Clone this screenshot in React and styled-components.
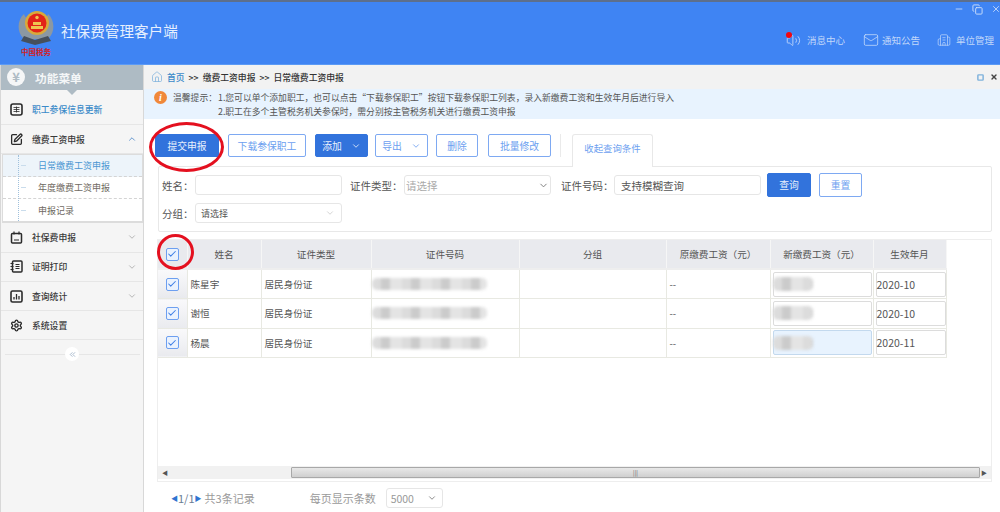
import React from 'react'
import styled, { createGlobalStyle } from 'styled-components'
import {
  ChevronDown, ChevronUp, ChevronsLeft, House, Mail, Building2, Volume2, Minus, X,
  SquarePen, Settings, Check, Square, Copy,
} from 'lucide-react'

const GlobalStyle = createGlobalStyle`
  html, body { margin: 0; padding: 0; background: #fff; }
  * { box-sizing: border-box; }
  body { font-family: "Noto Sans CJK SC", "Liberation Sans", sans-serif; color: #444; }
`

const Page = styled.div`
  width: 1000px;
  height: 512px;
  overflow: hidden;
  display: flex;
  flex-direction: column;
`

const Header = styled.header`
  height: 65px;
  flex: none;
  display: flex;
  background: #3f84f3;
  border-top: 2px solid #5d6f8c;
  border-bottom: 1px solid #5b9af5;
  padding-left: 18px;
`

const Logo = styled.div`
  width: 36px;
  display: flex;
  flex-direction: column;
  align-items: center;
  padding-top: 8px;
`

const LogoMark = styled.span`
  font-size: 7.5px;
  line-height: 10px;
  font-weight: 700;
  color: #d3201f;
  white-space: nowrap;
`

const AppTitle = styled.h1`
  margin: 0 0 0 7px;
  padding-top: 19px;
  font-size: 14.6px;
  line-height: 20px;
  font-weight: 400;
  color: #e6f0fe;
  flex: 1;
`

const HeaderRight = styled.div`
  display: flex;
  flex-direction: column;
  align-items: flex-end;
`

const WindowControls = styled.div`
  display: flex;
  gap: 8px;
  color: #cfe0fb;
  height: 14px;
  align-items: center;
  margin: 0 -1px 1px 0;
`

const TopNav = styled.nav`
  display: flex;
  margin: 15px 6px 0 0;
`

const TopNavItem = styled.a`
  display: flex;
  align-items: center;
  font-size: 9.5px;
  line-height: 16px;
  color: #c2d8fa;
  margin-left: ${p => p.$ml}px;
  gap: ${p => p.$gap}px;
`

const IconWithDot = styled.span`
  position: relative;
  display: flex;
  &::after {
    content: "";
    position: absolute;
    left: 0;
    top: -1px;
    width: 6px;
    height: 6px;
    border-radius: 50%;
    background: #f3050f;
  }
`

const Body = styled.div`
  flex: 1;
  display: flex;
  min-height: 0;
`

const Sidebar = styled.aside`
  width: 144px;
  flex: none;
  background: #f5f5f5;
  border-left: 1px solid #d8d8d8;
  border-right: 1px solid #d8d8d8;
`

const SideTitle = styled.div`
  position: relative;
  height: 25px;
  background: #aebbc4;
  display: flex;
  align-items: center;
  padding: 0 0 1px 6px;
  color: #f4f6f7;
  font-size: 11.7px;
  font-weight: 700;
  gap: 10px;
  &::after {
    content: "";
    position: absolute;
    left: 66px;
    bottom: -5px;
    border: 5px solid transparent;
    border-bottom: 0;
    border-top-color: #aebbc4;
  }
`

const YenBadge = styled.span`
  width: 18px;
  height: 18px;
  border-radius: 50%;
  background: #f5f6f7;
  color: #aebbc4;
  font-size: 13px;
  line-height: 18px;
  font-weight: 700;
  text-align: center;
`

const SideItem = styled.div`
  height: ${p => p.$h || 29.3}px;
  display: flex;
  align-items: center;
  padding: ${p => p.$pt || 0}px 6px 0 9px;
  gap: 9px;
  font-size: 8.8px;
  font-weight: 500;
  color: ${p => (p.$link ? '#3c8bc9' : '#3a3a3a')};
  border-bottom: 1px solid #e6e6e6;
  svg:first-child { color: #2b2b2b; flex: none; }
  > span { flex: 1; white-space: nowrap; }
`

const SubMenu = styled.div`
  position: relative;
  background: #fff;
  border: 1px solid #dcdcdc;
  border-width: 1px 1px 2px 1px;
  margin-left: 1px;
  &::before {
    content: "";
    position: absolute;
    left: 15px;
    top: 0;
    bottom: 0;
    border-left: 1px dotted #9fc0dc;
  }
`

const SubItem = styled.div`
  height: 22px;
  display: flex;
  align-items: center;
  padding-left: 34px;
  font-size: 9px;
  white-space: nowrap;
  color: ${p => (p.$active ? '#4a96d2' : '#6f6a62')};
  background: ${p => (p.$active ? '#edf4fa' : 'transparent')};
  border-bottom: ${p => (p.$last ? 'none' : '1px dashed #d4d4d4')};
  &::before {
    content: "";
    width: 5px;
    margin-left: -16px;
    margin-right: 12px;
    border-top: 1px solid #c9dcec;
  }
`

const Collapse = styled.div`
  height: 28px;
  display: flex;
  align-items: center;
  justify-content: center;
  background: linear-gradient(#e6e6e6, #e6e6e6) center / 135px 1px no-repeat;
`

const CollapseButton = styled.span`
  width: 14px;
  height: 14px;
  border-radius: 50%;
  background: #fff;
  color: #8da4bd;
  display: flex;
  align-items: center;
  justify-content: center;
`

const Main = styled.main`
  flex: 1;
  min-width: 0;
  display: flex;
  flex-direction: column;
`

const Crumbs = styled.div`
  height: 24px;
  flex: none;
  background: #f2f2f2;
  display: flex;
  align-items: center;
  padding: 0 2px 0 7px;
  font-size: 8.8px;
  font-weight: 500;
  color: #333;
  white-space: nowrap;
  gap: 4px;
  svg:first-child { color: #7fb2dc; }
`

const CrumbLink = styled.a`
  color: #3c8bc9;
`

const CrumbActions = styled.div`
  margin-left: auto;
  display: flex;
  align-items: center;
  gap: 6px;
  color: #444;
`

const Notice = styled.div`
  height: 30px;
  flex: none;
  background: #e8f3fe;
  display: flex;
  padding: 2px 0 0 10px;
  font-size: 8.8px;
  line-height: 13px;
  color: #555;
  white-space: nowrap;
`

const InfoDot = styled.span`
  width: 13px;
  height: 13px;
  border-radius: 50%;
  background: #f0883a;
  color: #fff;
  font: italic 700 10px/13px "Liberation Serif", serif;
  text-align: center;
  margin-right: 6px;
`

const NoticeLines = styled.div`
  display: grid;
  grid-template-columns: 45px auto;
`

const Toolbar = styled.div`
  display: flex;
  align-items: flex-start;
  height: 47px;
  flex: none;
  padding: 15px 0 0 11px;
`

const Btn = styled.button`
  position: relative;
  width: ${p => p.$w}px;
  height: ${p => p.$h || 23}px;
  margin-left: ${p => p.$ml || 0}px;
  flex: none;
  display: flex;
  align-items: center;
  justify-content: center;
  gap: 9px;
  padding: 0;
  font: inherit;
  font-size: 9.8px;
  border-radius: 2px;
  border: 1px solid ${p => (p.$primary ? '#3273dc' : '#7ea9f2')};
  background: ${p => (p.$primary ? '#3273dc' : '#fff')};
  color: ${p => (p.$primary ? '#e8f0fd' : '#6d9ff0')};
`

const RedEllipse = styled.span`
  position: absolute;
  left: ${p => p.$l}px;
  top: ${p => p.$t}px;
  width: ${p => p.$w}px;
  height: ${p => p.$h}px;
  border: 3px solid #e4101f;
  border-radius: 50%;
  pointer-events: none;
  z-index: 2;
`

const ToolDivider = styled.span`
  width: 1px;
  height: 23px;
  background: #eaeaea;
  margin-left: 9px;
`

const Tab = styled.div`
  position: relative;
  z-index: 1;
  width: 81px;
  height: 33px;
  margin-left: 11px;
  padding-top: 6px;
  text-align: center;
  font-size: 9.4px;
  line-height: 15px;
  color: #6d9ff0;
  background: #fff;
  border: 1px solid #e8e8e8;
  border-bottom: none;
  border-radius: 3px 3px 0 0;
`

const Filter = styled.div`
  flex: none;
  height: 66px;
  margin: 0 8px 0 14px;
  border: 1px solid #e8e8e8;
  border-radius: 2px;
  padding: 6px 0 0 3px;
  display: flex;
  flex-direction: column;
  gap: 4px;
`

const FilterRow = styled.div`
  display: flex;
  align-items: center;
  height: 24px;
`

const Label = styled.label`
  width: ${p => p.$w}px;
  margin-left: ${p => p.$ml || 0}px;
  font-size: 10.5px;
  white-space: nowrap;
  color: #555;
`

const Field = styled.div`
  width: ${p => p.$w || 147}px;
  height: ${p => p.$h || 20}px;
  display: flex;
  align-items: center;
  justify-content: space-between;
  padding: 0 ${p => (p.$pl ? 6 : 1)}px 0 ${p => p.$pl || 1}px;
  background: #fff;
  border: 1px solid #e6e6e6;
  border-radius: 3px;
  font-size: ${p => p.$fs || 10.5}px;
  color: ${p => p.$color || '#aaa'};
  svg { color: ${p => p.$arrow || '#777'}; }
`

const TableBox = styled.div`
  flex: none;
  height: 243px;
  margin: 7px 8px 0 13px;
  border: 1px solid #eee;
  display: flex;
  flex-direction: column;
`

const TableArea = styled.div`
  flex: 1;
  min-height: 0;
`

const DataTable = styled.table`
  position: relative;
  width: 788px;
  table-layout: fixed;
  border-collapse: collapse;
  font-size: 9.6px;
  color: #555;
`

const Col = styled.col`
  width: ${p => p.$w}px;
`

const Th = styled.th`
  height: 29px;
  padding: 0;
  font-weight: 400;
  background: #e9eaee;
  border-right: 1px solid #f6f6f6;
  border-bottom: 2px solid #eeeeee;
  position: relative;
`

const Td = styled.td`
  height: 29.6px;
  padding: 0 3px;
  background: #fff;
  border-right: 1px solid #e8e9e2;
  border-bottom: 1px solid #e8e9e2;
  white-space: nowrap;
`

const CheckCell = styled(Td)`
  padding: 0;
  background: linear-gradient(#f9f9fb, #e9eaee);
`

const BlurCell = styled(Td)`
  padding: 0;
`

const Tick = styled.span`
  display: flex;
  width: 13px;
  height: 13px;
  margin: 0 auto;
  align-items: center;
  justify-content: center;
  background: #eaf2fe;
  border: 1px solid #6d9ff0;
  border-radius: 2px;
  color: #3f7fe6;
`

const Smudge = styled.div`
  width: ${p => p.$w}px;
  height: ${p => p.$h || 12}px;
  margin-left: ${p => p.$ml || 0}px;
  border-radius: 5px;
  filter: blur(1.5px);
  background: repeating-linear-gradient(90deg, #dcdcdc 0 9px, #cbcbcb 9px 18px, #e4e4e4 18px 30px);
`

const PayInput = styled.div`
  width: ${p => p.$w}px;
  height: 25px;
  margin-left: ${p => p.$ml || 0}px;
  display: flex;
  align-items: center;
  background: ${p => (p.$focus ? '#e8f3fe' : '#fff')};
  border: 1px solid ${p => (p.$focus ? '#c3d9ee' : '#dcdcdc')};
  border-radius: 2px;
  font-size: 10.5px;
  color: #555;
`

const ScrollBar = styled.div`
  height: 13px;
  flex: none;
  margin-bottom: 2px;
  display: flex;
  align-items: center;
  background: #f1f1f1;
  color: #555;
  font-size: 6px;
  padding: 0 4px;
`

const ScrollThumb = styled.div`
  width: 689px;
  height: 11px;
  margin: 0 auto 0 123px;
  border: 1px solid #a8a8a8;
  border-radius: 1px;
  background: linear-gradient(#e8e8e8, #cfcfcf);
  color: #666;
  font-size: 6px;
  line-height: 9px;
  text-align: center;
`

const Pager = styled.div`
  flex: 1;
  display: flex;
  align-items: center;
  padding: 2px 0 0 27px;
  font-size: 11px;
  color: #9a9a9a;
  white-space: nowrap;
`

const PagerNum = styled.span`
  color: #6b7d94;
`

const Arrow = styled.span`
  color: #2f74d0;
  font-size: 7px;
  margin-right: ${p => p.$mr || 0}px;
`

const PagerLabel = styled.span`
  margin-left: 55px;
`

const PageSize = styled(Field)`
  width: 57px;
  height: 20px;
  margin-left: 10px;
  padding: 0 5px 0 4px;
  color: #999;
`

const Emblem = () => (
  <svg width="36" height="37" viewBox="0 0 36 37">
    <path d="M6 4C-1 10-1 22 5 28l6 3 7-2 7 2 6-3c6-6 6-18-1-24-2 9-22 9-24 0z" fill="#8b98a3" />
    <path d="M3 31l14 4 16-4-3-5-13 4-11-4z" fill="#46505c" />
    <circle cx="19" cy="13" r="12" fill="#d9a93a" />
    <circle cx="19" cy="13" r="9.5" fill="#e22318" />
    <path d="M13 16h12v3H13zM15 12h8v3h-8z" fill="#efc550" />
    <circle cx="19" cy="7.5" r="1.7" fill="#efc550" />
  </svg>
)

const TableIcon = () => (
  <svg width="13" height="13" viewBox="0 0 13 13" fill="none" stroke="currentColor">
    <rect x="1" y="1" width="11" height="11" rx="2" strokeWidth="1.6" />
    <path d="M3.5 4.5h6M3.5 6.5h6M3.5 8.5h6M6.5 3.5v6" strokeWidth=".8" />
  </svg>
)

const ClipIcon = () => (
  <svg width="13" height="13" viewBox="0 0 13 13" fill="none" stroke="currentColor">
    <rect x="1.5" y="2.5" width="10" height="9.5" rx="1" strokeWidth="1.5" />
    <path d="M4 .5v3M9 .5v3M4 9h5" strokeWidth="1.2" />
  </svg>
)

const NotebookIcon = () => (
  <svg width="13" height="13" viewBox="0 0 13 13" fill="none" stroke="currentColor">
    <rect x="2.5" y="1" width="9.5" height="11" rx="1" strokeWidth="1.5" />
    <path d="M.5 3.5h3M.5 6.5h3M.5 9.5h3M5.5 4.5h4M5.5 6.5h4M5.5 8.5h4" strokeWidth="1" />
  </svg>
)

const ChartIcon = () => (
  <svg width="13" height="13" viewBox="0 0 13 13" fill="none" stroke="currentColor">
    <rect x="1" y="1" width="11" height="11" rx="1.5" strokeWidth="1.6" />
    <path d="M4 9.5V7M6.5 9.5V4M9 9.5V6" strokeWidth="1.3" />
  </svg>
)

const rows = [
  { name: '陈星宇', date: '2020-10' },
  { name: '谢恒', date: '2020-10' },
  { name: '杨晨', date: '2020-11', focus: true },
]

const columns = [29, 74, 110, 148, 147, 104, 103, 73]

export default function App() {
  return (
    <Page>
      <GlobalStyle />
      <Header>
        <Logo>
          <Emblem />
          <LogoMark>中国税务</LogoMark>
        </Logo>
        <AppTitle>社保费管理客户端</AppTitle>
        <HeaderRight>
          <WindowControls>
            <Minus size={10} />
            <Copy size={11} />
            <X size={10} />
          </WindowControls>
          <TopNav>
            <TopNavItem $gap={6}>
              <IconWithDot><Volume2 size={15} strokeWidth={1.4} /></IconWithDot>
              消息中心
            </TopNavItem>
            <TopNavItem $ml={18} $gap={3}>
              <Mail size={16} strokeWidth={1.2} />
              通知公告
            </TopNavItem>
            <TopNavItem $ml={17} $gap={5}>
              <Building2 size={14} strokeWidth={1.2} />
              单位管理
            </TopNavItem>
          </TopNav>
        </HeaderRight>
      </Header>
      <Body>
        <Sidebar>
          <SideTitle><YenBadge>¥</YenBadge>功能菜单</SideTitle>
          <SideItem $h={35} $pt={5} $link><TableIcon /><span>职工参保信息更新</span></SideItem>
          <SideItem><SquarePen size={13} strokeWidth={2.4} /><span>缴费工资申报</span><ChevronUp size={10} color="#4a86c8" /></SideItem>
          <SubMenu>
            <SubItem $active>日常缴费工资申报</SubItem>
            <SubItem>年度缴费工资申报</SubItem>
            <SubItem $last>申报记录</SubItem>
          </SubMenu>
          <SideItem><ClipIcon /><span>社保费申报</span><ChevronDown size={10} color="#aaa" /></SideItem>
          <SideItem><NotebookIcon /><span>证明打印</span><ChevronDown size={10} color="#aaa" /></SideItem>
          <SideItem><ChartIcon /><span>查询统计</span><ChevronDown size={10} color="#aaa" /></SideItem>
          <SideItem><Settings size={13} strokeWidth={2.6} /><span>系统设置</span></SideItem>
          <Collapse><CollapseButton><ChevronsLeft size={9} /></CollapseButton></Collapse>
        </Sidebar>
        <Main>
          <Crumbs>
            <House size={12} strokeWidth={1.5} />
            <CrumbLink>首页</CrumbLink>
            <span>&gt;&gt;</span>
            <span>缴费工资申报</span>
            <span>&gt;&gt;</span>
            <span>日常缴费工资申报</span>
            <CrumbActions>
              <Square size={7} strokeWidth={5} />
              <X size={8} strokeWidth={4} />
            </CrumbActions>
          </Crumbs>
          <Notice>
            <InfoDot>i</InfoDot>
            <NoticeLines>
              <span>温馨提示：</span>
              <span>1.您可以单个添加职工，也可以点击“下载参保职工”按钮下载参保职工列表，录入新缴费工资和生效年月后进行导入</span>
              <span />
              <span>2.职工在多个主管税务机关参保时，需分别按主管税务机关进行缴费工资申报</span>
            </NoticeLines>
          </Notice>
          <Toolbar>
            <Btn $primary $w={64}>
              提交申报
              <RedEllipse $l={-7} $t={-13} $w={75} $h={50} />
            </Btn>
            <Btn $w={78} $ml={9}>下载参保职工</Btn>
            <Btn $primary $w={53} $ml={9}>添加<ChevronDown size={10} /></Btn>
            <Btn $w={53} $ml={7}>导出<ChevronDown size={10} /></Btn>
            <Btn $w={42} $ml={8}>删除</Btn>
            <Btn $w={63} $ml={10}>批量修改</Btn>
            <ToolDivider />
            <Tab>收起查询条件</Tab>
          </Toolbar>
          <Filter>
            <FilterRow>
              <Label $w={33}>姓名：</Label>
              <Field />
              <Label $w={54} $ml={8}>证件类型：</Label>
              <Field $color="#aaa">请选择<ChevronDown size={11} /></Field>
              <Label $w={53} $ml={10}>证件号码：</Label>
              <Field $pl={6} $color="#555">支持模糊查询</Field>
              <Btn $primary $w={44} $h={24} $ml={6}>查询</Btn>
              <Btn $w={43} $h={24} $ml={8}>重置</Btn>
            </FilterRow>
            <FilterRow>
              <Label $w={33}>分组：</Label>
              <Field $pl={5} $fs={9} $color="#555" $arrow="#ccc">请选择<ChevronDown size={10} /></Field>
            </FilterRow>
          </Filter>
          <TableBox>
            <TableArea>
              <DataTable>
                <colgroup>
                  {columns.map((w, i) => <Col key={i} $w={w} />)}
                </colgroup>
                <thead>
                  <tr>
                    <Th>
                      <Tick><Check size={10} strokeWidth={2.5} /></Tick>
                      <RedEllipse $l={-1} $t={-6} $w={37} $h={36} />
                    </Th>
                    <Th>姓名</Th>
                    <Th>证件类型</Th>
                    <Th>证件号码</Th>
                    <Th>分组</Th>
                    <Th>原缴费工资（元）</Th>
                    <Th>新缴费工资（元）</Th>
                    <Th>生效年月</Th>
                  </tr>
                </thead>
                <tbody>
                  {rows.map(r => (
                    <tr key={r.name}>
                      <CheckCell><Tick><Check size={10} strokeWidth={2.5} /></Tick></CheckCell>
                      <Td>{r.name}</Td>
                      <Td>居民身份证</Td>
                      <BlurCell><Smudge $w={115} /></BlurCell>
                      <Td />
                      <Td>--</Td>
                      <Td>
                        <PayInput $w={99} $ml={-1} $focus={r.focus}><Smudge $w={40} $h={14} $ml={-1} /></PayInput>
                      </Td>
                      <Td>
                        <PayInput $w={70} $ml={-1}>{r.date}</PayInput>
                      </Td>
                    </tr>
                  ))}
                </tbody>
              </DataTable>
            </TableArea>
            <ScrollBar>
              ◀
              <ScrollThumb>|||</ScrollThumb>
              ▶
            </ScrollBar>
          </TableBox>
          <Pager>
            <Arrow>◀</Arrow><PagerNum>1/1</PagerNum><Arrow $mr={3}>▶</Arrow>共3条记录
            <PagerLabel>每页显示条数</PagerLabel>
            <PageSize>5000<ChevronDown size={10} /></PageSize>
          </Pager>
        </Main>
      </Body>
    </Page>
  )
}
